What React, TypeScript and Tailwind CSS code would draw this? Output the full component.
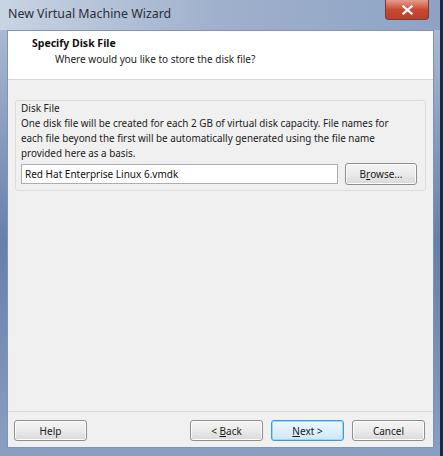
import React from 'react';

const font = { fontFamily: '"Noto Sans", "Segoe UI", Tahoma, sans-serif' };

function WinButton({
  children,
  width,
  height = 'h-[21px]',
  primary = false,
}: {
  children: React.ReactNode;
  width: string;
  height?: string;
  primary?: boolean;
}) {
  return (
    <button
      className={`${width} ${height} shrink-0 rounded-[3px] border text-[10px] leading-none text-[#1a1a1a] flex items-center justify-center whitespace-pre ${
        primary
          ? 'border-[#3c9ad6] bg-gradient-to-b from-[#eef7fd] to-[#cde8f8] shadow-[inset_0_0_0_1px_#9fd6f4]'
          : 'border-[#8e8e8e] bg-gradient-to-b from-[#f4f4f4] via-[#ebebeb] to-[#d9d9d9] shadow-[inset_0_0_0_1px_#fcfcfc]'
      }`}
    >
      {children}
    </button>
  );
}

export default function App() {
  return (
    <div
      className="w-[443px] h-[456px] flex flex-col overflow-hidden border-r-[3px] border-[#1f2a40] bg-gradient-to-r from-[#b8c6da] via-[#7d93b8] to-[#9fb2cf]"
      style={font}
    >
      {/* Title bar */}
      <div className="relative h-[30px] shrink-0 bg-gradient-to-r from-[#c9d4e3] via-[#9fb0cc] to-[#8ea3c4]">
        <span className="absolute left-[8px] top-[5px] text-[12.4px] text-[#2a2f3a]">
          New Virtual Machine Wizard
        </span>
        <div className="absolute left-[385px] top-0 w-[44px] h-[20px] rounded-b-[4px] border border-t-0 border-[#7a3a36] bg-gradient-to-b from-[#e39d8e] via-[#c94a33] to-[#b8402c] flex items-center justify-center">
          <svg width="11" height="10" viewBox="0 0 11 10">
            <path d="M1.5 1.5 L9.5 8.5 M9.5 1.5 L1.5 8.5" stroke="#ffffff" strokeWidth="2.2" strokeLinecap="square" />
          </svg>
        </div>
      </div>

      {/* Window frame + client area */}
      <div className="flex-1 flex pl-[7px] pr-[6px] pb-[8px] bg-gradient-to-b from-[#a9b9d2] via-[#6580aa] to-[#8aa0c2]">
        <div className="flex-1 flex flex-col bg-[#f0f0f0] border border-[#8293b1]">
          {/* Header */}
          <div className="h-[49px] shrink-0 bg-white border-b border-[#d6d6d6] pl-[24px] pt-[5px]">
            <div className="text-[10.5px] font-bold text-[#111] leading-[14px]">Specify Disk File</div>
            <div className="text-[10px] text-[#222] leading-[14px] pl-[23px] pt-[2px]">
              Where would you like to store the disk file?
            </div>
          </div>

          {/* Body */}
          <div className="flex-1 px-[7px] pt-[20px]">
            <div className="border border-[#dcdcdc] rounded-[3px] pl-[5px] pr-[8px] pb-[5px]">
              <div className="text-[10px] text-[#222] leading-[13px] pt-[1px]">Disk File</div>
              <p className="text-[9.9px] text-[#1a1a1a] leading-[15px] mt-[1px]">
                One disk file will be created for each 2 GB of virtual disk capacity. File names for
                <br />
                each file beyond the first will be automatically generated using the file name
                <br />
                provided here as a basis.
              </p>
              <div className="flex items-center gap-[7px] mt-[2px]">
                <div className="flex-1 h-[20px] border border-[#abadb3] bg-white px-[3px] flex items-center text-[10px] text-[#111]">
                  Red Hat Enterprise Linux 6.vmdk
                </div>
                <WinButton width="w-[72px]" height="h-[22px]">
                  B<span className="underline">r</span>owse...
                </WinButton>
              </div>
            </div>
          </div>

          {/* Footer */}
          <div className="shrink-0 border-t border-[#d5d5d5] pl-[6px] pr-[8px] pt-[8px] pb-[6px] flex items-center">
            <WinButton width="w-[73px]">Help</WinButton>
            <div className="flex-1" />
            <div className="flex gap-[8px]">
              <WinButton width="w-[73px]">
                {'< '}
                <span className="underline">B</span>
                {'ack'}
              </WinButton>
              <WinButton width="w-[73px]" primary>
                <span className="underline">N</span>
                {'ext >'}
              </WinButton>
              <WinButton width="w-[73px]">Cancel</WinButton>
            </div>
          </div>
        </div>
      </div>
    </div>
  );
}
